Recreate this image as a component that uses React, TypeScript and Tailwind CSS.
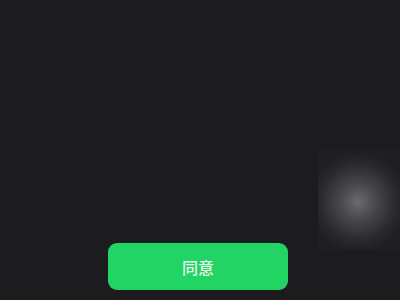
export default function App() {
  return (
    <div className="relative flex h-[300px] w-[400px] flex-col overflow-hidden bg-[#1c1b1e] font-['Noto_Sans_CJK_SC',sans-serif]">
      <div className="flex-1" />
      <div className="flex justify-center pb-[10px] pr-[4px]">
        <button className="flex h-[47px] w-[180px] items-center justify-center rounded-[9px] bg-[#22d463] text-[16px] font-medium text-[#e8f5ea]">
          同意
        </button>
      </div>
      {/* floating blurred assistive button */}
      <div className="pointer-events-none absolute left-[318px] top-[150px] h-[100px] w-[90px] bg-[radial-gradient(circle_at_40px_52px,#6b6a6e_0px,#48474b_18px,#2a292d_38px,#1f1e22_50px)]" />
    </div>
  );
}
